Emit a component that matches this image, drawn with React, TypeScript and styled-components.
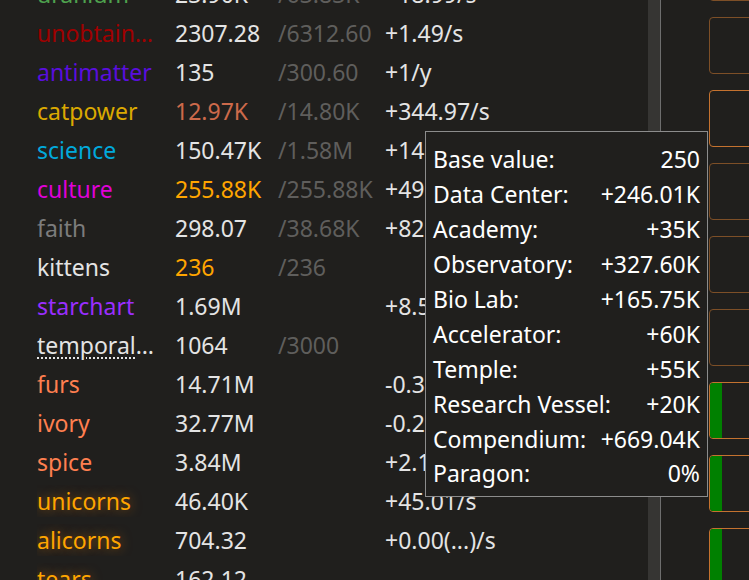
import React from "react";
import styled, { createGlobalStyle } from "styled-components";

const Global = createGlobalStyle`
  html, body {
    margin: 0;
    padding: 0;
    background: #201f1d;
    overflow: hidden;
  }
  body {
    font-family: "Noto Sans", "Liberation Sans", sans-serif;
  }
`;

const Page = styled.div`
  position: relative;
  display: flex;
  width: 749px;
  height: 580px;
  overflow: hidden;
  background: #201f1d;
  font-family: "Noto Sans", "Liberation Sans", sans-serif;
`;

const LeftPanel = styled.div`
  width: 648px;
  flex: none;
  overflow: hidden;
  padding-left: 37px;
  box-sizing: border-box;
`;

const ResourceList = styled.div`
  display: flex;
  flex-direction: column;
  margin-top: -26px;
`;

const Row = styled.div`
  display: grid;
  grid-template-columns: 138px 103px 107px 1fr;
  height: 39px;
  align-items: center;
  font-size: 23px;
  white-space: nowrap;
`;

const Name = styled.span<{ $color: string; $glow?: boolean; $dotted?: boolean }>`
  display: block;
  max-width: 121px;
  overflow: hidden;
  text-overflow: ellipsis;
  color: ${(p) => p.$color};
  text-shadow: ${(p) => (p.$glow ? "0 0 12px rgba(255,140,0,0.55)" : "none")};
  text-decoration: ${(p) => (p.$dotted ? "underline dotted" : "none")};
  text-underline-offset: 4px;
  text-decoration-thickness: 2px;
`;

const Amount = styled.span<{ $color?: string }>`
  color: ${(p) => p.$color || "#e4e4e4"};
`;

const Max = styled.span`
  color: #5f5e5c;
`;

const Rate = styled.span`
  color: #e4e4e4;
`;

const ScrollTrack = styled.div`
  width: 12px;
  flex: none;
  background: #363533;
  border-right: 1px solid #6e6e6e;
`;

const RightPanel = styled.div`
  flex: 1;
  overflow: hidden;
  padding-left: 48px;
`;

const ButtonColumn = styled.div`
  display: flex;
  flex-direction: column;
  gap: 16px;
  margin-top: -56px;
`;

const BuildButton = styled.div<{ $bright?: boolean }>`
  position: relative;
  display: flex;
  width: 200px;
  height: 57px;
  box-sizing: border-box;
  border: 1px solid ${(p) => (p.$bright ? "#c4722f" : "#7d4f27")};
  border-radius: 4px;
  overflow: hidden;
`;

const Progress = styled.div`
  width: 12px;
  height: 100%;
  background: #008000;
`;

const Tooltip = styled.div`
  position: absolute;
  left: 425px;
  top: 131px;
  width: 283px;
  height: 366px;
  box-sizing: border-box;
  border: 1px solid #8c8c8c;
  background: #201f1d;
  padding: 10px 7px 4px 7px;
  display: flex;
  flex-direction: column;
`;

const TipRow = styled.div`
  display: flex;
  justify-content: space-between;
  height: 34.9px;
  align-items: center;
  font-size: 23px;
  color: #ffffff;
  white-space: nowrap;
`;

type Res = {
  name: string;
  color: string;
  amount: string;
  amountColor?: string;
  max?: string;
  rate?: string;
  glow?: boolean;
  dotted?: boolean;
};

const resources: Res[] = [
  { name: "uranium", color: "#4ea24e", amount: "23.90K", max: "/63.83K", rate: "+18.99/s" },
  { name: "unobtainium", color: "#a00000", amount: "2307.28", max: "/6312.60", rate: "+1.49/s" },
  { name: "antimatter", color: "#5a0ede", amount: "135", max: "/300.60", rate: "+1/y" },
  { name: "catpower", color: "#dba901", amount: "12.97K", amountColor: "#cd6a4b", max: "/14.80K", rate: "+344.97/s" },
  { name: "science", color: "#01a9db", amount: "150.47K", max: "/1.58M", rate: "+14.26K/s" },
  { name: "culture", color: "#df01d7", amount: "255.88K", amountColor: "#ffa500", max: "/255.88K", rate: "+49.21/s" },
  { name: "faith", color: "#7c7c7c", amount: "298.07", max: "/38.68K", rate: "+82.14/s" },
  { name: "kittens", color: "#e4e4e4", amount: "236", amountColor: "#ffa500", max: "/236" },
  { name: "starchart", color: "#9a2efe", amount: "1.69M", rate: "+8.52/s" },
  { name: "temporal flux", color: "#e4e4e4", amount: "1064", max: "/3000", dotted: true },
  { name: "furs", color: "#ff7f50", amount: "14.71M", rate: "-0.34K/s" },
  { name: "ivory", color: "#ff7f50", amount: "32.77M", rate: "-0.21K/s" },
  { name: "spice", color: "#ff7f50", amount: "3.84M", rate: "+2.13K/s" },
  { name: "unicorns", color: "#ffa500", amount: "46.40K", rate: "+45.01/s", glow: true },
  { name: "alicorns", color: "#ffa500", amount: "704.32", rate: "+0.00(...)/s", glow: true },
  { name: "tears", color: "#ffa500", amount: "162.12", glow: true },
];

const tipLines: [string, string][] = [
  ["Base value:", "250"],
  ["Data Center:", "+246.01K"],
  ["Academy:", "+35K"],
  ["Observatory:", "+327.60K"],
  ["Bio Lab:", "+165.75K"],
  ["Accelerator:", "+60K"],
  ["Temple:", "+55K"],
  ["Research Vessel:", "+20K"],
  ["Compendium:", "+669.04K"],
  ["Paragon:", "0%"],
];

const buttons = [
  { bright: false, progress: false },
  { bright: false, progress: false },
  { bright: true, progress: false },
  { bright: false, progress: false },
  { bright: false, progress: false },
  { bright: false, progress: false },
  { bright: true, progress: true },
  { bright: true, progress: true },
  { bright: true, progress: true },
];

export default function App() {
  return (
    <>
      <Global />
      <Page>
        <LeftPanel>
          <ResourceList>
            {resources.map((r) => (
              <Row key={r.name}>
                <Name $color={r.color} $glow={r.glow} $dotted={r.dotted}>
                  {r.name}
                </Name>
                <Amount $color={r.amountColor}>{r.amount}</Amount>
                <Max>{r.max || ""}</Max>
                <Rate>{r.rate || ""}</Rate>
              </Row>
            ))}
          </ResourceList>
        </LeftPanel>
        <ScrollTrack />
        <RightPanel>
          <ButtonColumn>
            {buttons.map((b, i) => (
              <BuildButton key={i} $bright={b.bright}>
                {b.progress && <Progress />}
              </BuildButton>
            ))}
          </ButtonColumn>
        </RightPanel>
        <Tooltip>
          {tipLines.map(([k, v]) => (
            <TipRow key={k}>
              <span>{k}</span>
              <span>{v}</span>
            </TipRow>
          ))}
        </Tooltip>
      </Page>
    </>
  );
}
